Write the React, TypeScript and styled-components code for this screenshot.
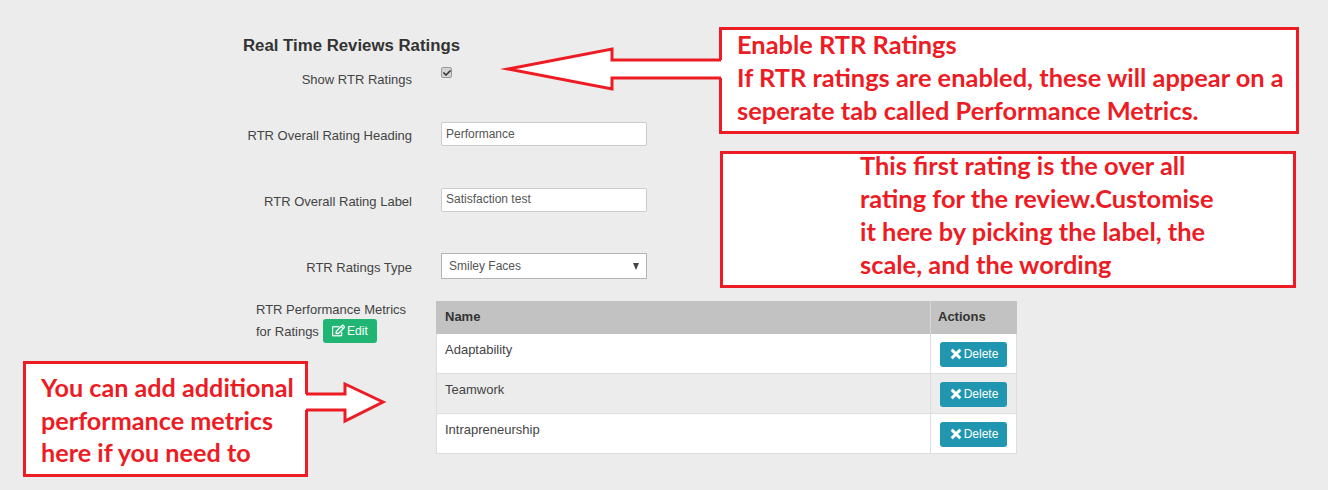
import React from 'react'
import styled, { createGlobalStyle } from 'styled-components'
import { FaCheck, FaRegEdit, FaTimes } from 'react-icons/fa'

const GlobalStyle = createGlobalStyle`
  html, body {
    margin: 0;
    background: #ececec;
  }
`

const Page = styled.div`
  position: relative;
  width: 1328px;
  height: 490px;
  overflow: hidden;
  background: #ececec;
  font-family: 'Liberation Sans', Arial, sans-serif;
  font-size: 13px;
  color: #333;
`

const Form = styled.form`
  padding: 37px 0 0 243px;
`

const Heading = styled.h3`
  margin: 0;
  font-size: 16.8px;
  line-height: 18px;
  font-weight: 700;
  color: #333;
`

const Row = styled.div<{ $height: number }>`
  display: grid;
  grid-template-columns: 169px 581px;
  column-gap: 24px;
  height: ${({ $height }) => $height}px;
`

const Label = styled.label<{ $top: number }>`
  padding-top: ${({ $top }) => $top}px;
  font-size: 13px;
  line-height: 17px;
  text-align: right;
  color: #444;
`

const Control = styled.div`
  padding-left: 5px;
`

const CheckBox = styled.span`
  display: flex;
  align-items: center;
  justify-content: center;
  width: 9px;
  height: 9px;
  margin-top: 12px;
  border: 1px solid #999;
  border-radius: 2px;
  background: #d4d4d4;
  color: #333;
  font-size: 8px;
`

const TextInput = styled.input<{ $inset: number }>`
  display: block;
  box-sizing: border-box;
  width: 206px;
  height: 24px;
  padding: 0 4px ${({ $inset }) => $inset}px;
  border: 1px solid #ccc;
  border-radius: 2px;
  background: #fff;
  font-family: inherit;
  font-size: 12px;
  color: #555;
  outline: none;
`

const SelectBox = styled.div`
  display: flex;
  align-items: center;
  justify-content: space-between;
  box-sizing: border-box;
  width: 206px;
  height: 26px;
  padding: 0 7px;
  border: 1px solid #b4b4b4;
  background: #fff;
  font-size: 12px;
  color: #555;
`

const Caret = styled.span`
  width: 0;
  height: 0;
  border-left: 3.5px solid transparent;
  border-right: 3.5px solid transparent;
  border-top: 7px solid #444;
`

const MetricsLabel = styled.div`
  padding-left: 13px;
  color: #444;
`

const MetricsLine = styled.div`
  box-sizing: border-box;
  height: 21px;
  padding-top: 1px;
  line-height: 21px;
`

const MetricsAction = styled.div`
  display: flex;
  align-items: center;
  gap: 4px;
  height: 24px;
`

const Button = styled.button<{ $bg: string }>`
  display: inline-flex;
  align-items: center;
  justify-content: center;
  box-sizing: border-box;
  padding: 0 0 1px;
  border: 0;
  border-radius: 3px;
  background: ${({ $bg }) => $bg};
  color: #fff;
  font-family: inherit;
  font-size: 12px;
  cursor: pointer;
`

const EditButton = styled(Button)`
  gap: 2px;
  width: 54px;
  height: 24px;

  svg {
    font-size: 13px;
    stroke: #fff;
    stroke-width: 12;
  }
`

const DeleteButton = styled(Button)`
  gap: 1px;
  width: 67px;
  height: 25px;

  svg {
    font-size: 14px;
    stroke: #fff;
    stroke-width: 20;
  }
`

const TableCell = styled.div`
  padding-top: 3px;
`

const Table = styled.table`
  width: 581px;
  table-layout: fixed;
  border-collapse: separate;
  border-spacing: 0;
  font-size: 13px;
`

const HeadCell = styled.th`
  box-sizing: border-box;
  height: 33px;
  padding: 0 8px 2px;
  border-right: 1px solid #d8d8d8;
  background: #c2c2c2;
  text-align: left;
  font-weight: 700;
  color: #333;

  &:first-child {
    padding-left: 9px;
  }

  &:last-child {
    padding-left: 7px;
    border-right: 0;
  }
`

const BodyRow = styled.tr<{ $striped: boolean }>`
  background: ${({ $striped }) => ($striped ? '#ececec' : '#fff')};
`

const BodyCell = styled.td`
  box-sizing: border-box;
  height: 40px;
  padding: 8px 8px 0 9px;
  border-right: 1px solid #ddd;
  border-bottom: 1px solid #ddd;
  vertical-align: top;
  color: #444;

  &:first-child {
    padding-left: 8px;
    border-left: 1px solid #ddd;
  }
`

const Callout = styled.div`
  position: absolute;
  box-sizing: border-box;
  border: 3px solid #ed1c24;
  background: #fff;
  color: #ed1c24;
  font-family: Lato, 'Noto Sans', sans-serif;
  font-weight: 700;
  font-size: 25.4px;
  line-height: 33px;
`

const CalloutText = styled.div<{ $lift: number }>`
  margin-top: -${({ $lift }) => $lift}px;
`

const EnableCallout = styled(Callout)`
  left: 719px;
  top: 27px;
  width: 580px;
  height: 107px;
  padding-left: 15px;
`

const FirstRatingCallout = styled(Callout)`
  left: 720px;
  top: 151px;
  width: 576px;
  height: 137px;
  padding-left: 137px;
`

const MetricsCallout = styled(Callout)`
  left: 23px;
  top: 361px;
  width: 285px;
  height: 116px;
  padding: 7px 0 0 15px;
  font-size: 25.2px;
  line-height: 32.5px;
`

const ArrowLayer = styled.svg`
  position: absolute;
  left: 0;
  top: 0;
  pointer-events: none;
`

const metrics = ['Adaptability', 'Teamwork', 'Intrapreneurship']

const Arrow = ({ points, open }: { points: string; open: string }) => (
  <>
    <polygon points={points} fill="#fff" />
    <polyline
      points={open}
      fill="none"
      stroke="#ed1c24"
      strokeWidth={3}
      strokeMiterlimit={12}
    />
  </>
)

const App = () => {
  return (
    <Page>
      <GlobalStyle />
      <Form>
        <Heading>Real Time Reviews Ratings</Heading>
        <Row $height={67}>
          <Label $top={16}>Show RTR Ratings</Label>
          <Control>
            <CheckBox>
              <FaCheck />
            </CheckBox>
          </Control>
        </Row>
        <Row $height={66}>
          <Label $top={5}>RTR Overall Rating Heading</Label>
          <Control>
            <TextInput $inset={1} defaultValue="Performance" />
          </Control>
        </Row>
        <Row $height={65}>
          <Label $top={5}>RTR Overall Rating Label</Label>
          <Control>
            <TextInput $inset={3} defaultValue="Satisfaction test" />
          </Control>
        </Row>
        <Row $height={45}>
          <Label $top={6}>RTR Ratings Type</Label>
          <Control>
            <SelectBox>
              Smiley Faces
              <Caret />
            </SelectBox>
          </Control>
        </Row>
        <Row $height={160}>
          <MetricsLabel>
            <MetricsLine>RTR Performance Metrics</MetricsLine>
            <MetricsAction>
              for Ratings
              <EditButton type="button" $bg="#20b573">
                <FaRegEdit />
                Edit
              </EditButton>
            </MetricsAction>
          </MetricsLabel>
          <TableCell>
            <Table>
              <colgroup>
                <col width={495} />
                <col width={86} />
              </colgroup>
              <thead>
                <tr>
                  <HeadCell>Name</HeadCell>
                  <HeadCell>Actions</HeadCell>
                </tr>
              </thead>
              <tbody>
                {metrics.map((name, i) => (
                  <BodyRow key={name} $striped={i % 2 === 1}>
                    <BodyCell>{name}</BodyCell>
                    <BodyCell>
                      <DeleteButton type="button" $bg="#2096b0">
                        <FaTimes />
                        Delete
                      </DeleteButton>
                    </BodyCell>
                  </BodyRow>
                ))}
              </tbody>
            </Table>
          </TableCell>
        </Row>
      </Form>

      <EnableCallout>
        <CalloutText $lift={2}>
          Enable RTR Ratings
          <br />
          If RTR ratings are enabled, these will appear on a
          <br />
          seperate tab called Performance Metrics.
        </CalloutText>
      </EnableCallout>
      <FirstRatingCallout>
        <CalloutText $lift={5}>
          This first rating is the over all
          <br />
          rating for the review.Customise
          <br />
          it here by picking the label, the
          <br />
          scale, and the wording
        </CalloutText>
      </FirstRatingCallout>
      <MetricsCallout>
        You can add additional
        <br />
        performance metrics
        <br />
        here if you need to
      </MetricsCallout>

      <ArrowLayer width={1328} height={490} viewBox="0 0 1328 490">
        <Arrow
          points="723,60 612,60 612,49 508,69 612,89 612,78 723,78"
          open="721,60 612,60 612,49 508,69 612,89 612,78 721,78"
        />
        <Arrow
          points="305,394 345,394 345,384 383,402 345,421 345,410 305,410"
          open="306,394 345,394 345,384 383,402 345,421 345,410 306,410"
        />
      </ArrowLayer>
    </Page>
  )
}

export default App
